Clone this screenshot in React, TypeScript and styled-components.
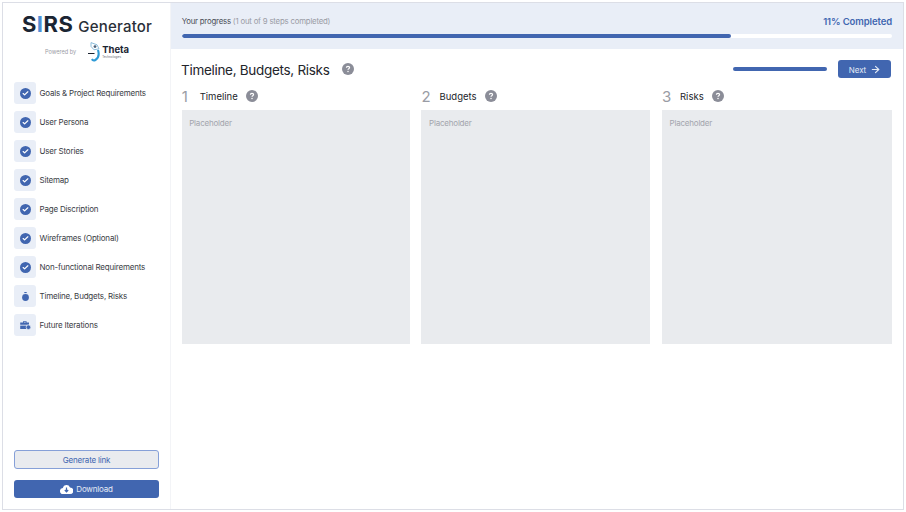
import styled, { createGlobalStyle } from "styled-components";
import { ArrowRight, Check } from "lucide-react";

const steps = [
  { label: "Goals & Project Requirements", state: "done" },
  { label: "User Persona", state: "done" },
  { label: "User Stories", state: "done" },
  { label: "Sitemap", state: "done" },
  { label: "Page Discription", state: "done" },
  { label: "Wireframes (Optional)", state: "done" },
  { label: "Non-functional Requirements", state: "done" },
  { label: "Timeline, Budgets, Risks", state: "current" },
  { label: "Future Iterations", state: "todo" },
];

const columns = ["Timeline", "Budgets", "Risks"];

function HelpIcon({ size = 12 }: { size?: number }) {
  return (
    <svg width={size} height={size} viewBox="0 0 12 12">
      <circle cx="6" cy="6" r="6" fill="#8b8d98" />
      <path
        d="M4.4 4.8c0-1 .7-1.5 1.6-1.5s1.6.5 1.6 1.3c0 1.1-1.6 1.1-1.6 2.2"
        fill="none"
        stroke="#fff"
        strokeWidth="1.2"
      />
      <circle cx="6" cy="8.6" r=".75" fill="#fff" />
    </svg>
  );
}

function StepIcon({ state }: { state: string }) {
  if (state === "done") {
    return (
      <DoneDot>
        <Check size={7} strokeWidth={4} color="#fff" />
      </DoneDot>
    );
  }
  if (state === "current") {
    return (
      <svg width="7" height="9" viewBox="0 0 7 9">
        <rect x="2.3" y="0" width="2.4" height="1.1" fill="#4166b0" />
        <circle cx="3.5" cy="5.5" r="3.4" fill="#4166b0" />
      </svg>
    );
  }
  return (
    <svg width="11" height="9" viewBox="0 0 11 9">
      <path
        d="M3 1.6V.3h3.6v1.3H9v2.2H.2V1.6zM3.9 1.1v.5h1.8v-.5z"
        fill="#4166b0"
        fillRule="evenodd"
      />
      <path d="M.2 4.6h6V8H.2z" fill="#4166b0" />
      <circle cx="8.4" cy="6.2" r="2.3" fill="#4166b0" stroke="#e9eef7" strokeWidth=".6" />
    </svg>
  );
}

function ThetaMark() {
  return (
    <svg width="13" height="20" viewBox="0 0 13 20">
      <path d="M3 .6l6 2.2 2 4-5 1-3-3.4z" fill="none" stroke="#7fb6d8" strokeWidth=".9" />
      <circle cx="7" cy="4.6" r="1.4" fill="#4a5f78" />
      <path d="M10 8c1.2 4 .8 8-2.6 10-1.4.8-2.8.4-3.6-.8" fill="none" stroke="#2f9bd6" strokeWidth="2.1" />
      <path d="M0 11.5h6.5" stroke="#1b2330" strokeWidth="1" />
    </svg>
  );
}

function CloudDownload() {
  return (
    <svg width="13" height="11" viewBox="0 0 13 11">
      <path
        d="M3.2 10A3 3 0 0 1 2.8 4 3.8 3.8 0 0 1 10 3.4 3.3 3.3 0 0 1 10 10z"
        fill="#fff"
      />
      <path d="M6.5 3.6v4M4.8 6l1.7 1.8L8.2 6" fill="none" stroke="#4166b0" strokeWidth="1.2" />
    </svg>
  );
}

export default function App() {
  return (
    <>
      <GlobalStyle />
      <Frame>
        <Sidebar>
          <Brand>
            <Wordmark>
              <Sirs>
                S<BlueI>I</BlueI>RS
              </Sirs>
              <Generator>Generator</Generator>
            </Wordmark>
            <PoweredRow>
              <PoweredBy>Powered by</PoweredBy>
              <ThetaMark />
              <ThetaText>
                <ThetaName>Theta</ThetaName>
                <ThetaSub>Technologies</ThetaSub>
              </ThetaText>
            </PoweredRow>
          </Brand>
          <StepList>
            {steps.map((s) => (
              <StepRow key={s.label}>
                <StepBox>
                  <StepIcon state={s.state} />
                </StepBox>
                <StepLabel>{s.label}</StepLabel>
              </StepRow>
            ))}
          </StepList>
          <SideActions>
            <GenerateButton>Generate link</GenerateButton>
            <DownloadButton>
              <CloudDownload />
              Download
            </DownloadButton>
          </SideActions>
        </Sidebar>
        <Main>
          <ProgressPanel>
            <ProgressText>
              <ProgressLabel>
                Your progress <ProgressNote>(1 out of 9 steps completed)</ProgressNote>
              </ProgressLabel>
              <Completed>11% Completed</Completed>
            </ProgressText>
            <Track>
              <Fill />
            </Track>
          </ProgressPanel>
          <Content>
            <TitleRow>
              <Title>Timeline, Budgets, Risks</Title>
              <HelpIcon />
              <TitleActions>
                <MiniBar />
                <NextButton>
                  <NextLabel>Next</NextLabel>
                  <ArrowRight size={11} strokeWidth={2.5} />
                </NextButton>
              </TitleActions>
            </TitleRow>
            <Columns>
              {columns.map((c, i) => (
                <Column key={c}>
                  <ColumnHead>
                    <ColumnNumber>{i + 1}</ColumnNumber>
                    <ColumnName>{c}</ColumnName>
                    <HelpIcon />
                  </ColumnHead>
                  <Placeholder>Placeholder</Placeholder>
                </Column>
              ))}
            </Columns>
          </Content>
        </Main>
      </Frame>
    </>
  );
}

const GlobalStyle = createGlobalStyle`
  html, body {
    margin: 0;
    height: 100%;
    background: #fff;
  }
  body {
    font-family: Inter, "Noto Sans", sans-serif;
    color: #23252b;
  }
  * {
    box-sizing: border-box;
  }
`;

const Frame = styled.div`
  width: 902px;
  height: 508px;
  margin: 2px 0 0 2px;
  border: 1px solid #dcdee6;
  display: flex;
  overflow: hidden;
`;

const Sidebar = styled.aside`
  width: 168px;
  flex: none;
  border-right: 1px solid #f3f4f7;
  padding: 8px 10px 11px 11px;
  display: flex;
  flex-direction: column;
`;

const Brand = styled.div`
  display: flex;
  flex-direction: column;
  align-items: center;
  height: 71px;
`;

const Wordmark = styled.div`
  display: flex;
  align-items: baseline;
  gap: 5px;
  line-height: 26px;
`;

const Sirs = styled.span`
  font-size: 22px;
  font-weight: 700;
  letter-spacing: 0.5px;
  color: #1b2533;
`;

const BlueI = styled.span`
  color: #4f8fd6;
`;

const Generator = styled.span`
  font-size: 15px;
  font-weight: 500;
  color: #2a2f38;
  letter-spacing: 0.2px;
`;

const PoweredRow = styled.div`
  display: flex;
  align-items: center;
  margin-top: 2px;
`;

const PoweredBy = styled.span`
  font-size: 5.6px;
  color: #9a9ca5;
  margin-right: 12px;
`;

const ThetaText = styled.div`
  display: flex;
  flex-direction: column;
  margin-left: 1px;
`;

const ThetaName = styled.span`
  font-size: 9.5px;
  line-height: 10px;
  font-weight: 700;
  color: #1b2533;
`;

const ThetaSub = styled.span`
  font-size: 3px;
  line-height: 4px;
  color: #666a75;
`;

const StepList = styled.ul`
  list-style: none;
  margin: 0;
  padding: 0;
  display: flex;
  flex-direction: column;
  gap: 7px;
`;

const StepRow = styled.li`
  display: flex;
  align-items: center;
  gap: 3.5px;
  height: 22px;
`;

const StepBox = styled.div`
  width: 22px;
  height: 22px;
  border-radius: 3px;
  background: #e9eef7;
  display: grid;
  place-items: center;
`;

const DoneDot = styled.div`
  width: 11px;
  height: 11px;
  border-radius: 50%;
  background: #4166b0;
  display: grid;
  place-items: center;
`;

const StepLabel = styled.span`
  font-size: 8px;
  letter-spacing: -0.2px;
  color: #3a3d45;
`;

const SideActions = styled.div`
  margin-top: auto;
  display: flex;
  flex-direction: column;
  gap: 11px;
`;

const GenerateButton = styled.button`
  width: 145px;
  height: 19px;
  padding: 0;
  border: 1px solid #86a0d8;
  border-radius: 3px;
  background: #e9ebef;
  color: #4166b0;
  font: 400 8px Inter, sans-serif;
  letter-spacing: -0.2px;
`;

const DownloadButton = styled.button`
  width: 145px;
  height: 18px;
  padding: 0;
  border: 0;
  border-radius: 3px;
  background: #4166b0;
  color: #e4eaf5;
  font: 400 8px Inter, sans-serif;
  letter-spacing: -0.2px;
  display: flex;
  align-items: center;
  justify-content: center;
  gap: 3px;
`;

const Main = styled.main`
  flex: 1;
  min-width: 0;
  display: flex;
  flex-direction: column;
`;

const ProgressPanel = styled.section`
  height: 46px;
  background: #e9eef7;
  padding: 11px 11px 0 10.7px;
`;

const ProgressText = styled.div`
  display: flex;
  justify-content: space-between;
  align-items: center;
  height: 14px;
  margin-bottom: 6px;
`;

const ProgressLabel = styled.span`
  font-size: 7.8px;
  letter-spacing: -0.2px;
  color: #4b4e57;
`;

const ProgressNote = styled.span`
  color: #9a9ca5;
`;

const Completed = styled.span`
  font-size: 9.5px;
  font-weight: 600;
  letter-spacing: -0.1px;
  color: #4166b0;
`;

const Track = styled.div`
  height: 3.5px;
  border-radius: 2px;
  background: #fff;
  overflow: hidden;
`;

const Fill = styled.div`
  width: 77.3%;
  height: 100%;
  border-radius: 2px;
  background: #4166b0;
`;

const Content = styled.div`
  flex: 1;
  padding: 11px 12px 0 10.7px;
`;

const TitleRow = styled.div`
  display: flex;
  align-items: center;
  gap: 12px;
  height: 18px;
`;

const Title = styled.h1`
  margin: 1px 0 0 -0.7px;
  font-size: 13.5px;
  line-height: 18px;
  font-weight: 400;
  letter-spacing: -0.3px;
  color: #23252b;
`;

const TitleActions = styled.div`
  margin-left: auto;
  display: flex;
  align-items: center;
  gap: 11px;
`;

const MiniBar = styled.div`
  width: 94px;
  height: 3.5px;
  border-radius: 2px;
  background: #4166b0;
`;

const NextButton = styled.button`
  width: 53px;
  height: 18px;
  padding: 0;
  border: 0;
  border-radius: 3px;
  background: #4166b0;
  color: #e4eaf5;
  font: 400 8px Inter, sans-serif;
  display: flex;
  align-items: center;
  justify-content: center;
  gap: 4px;
`;

const NextLabel = styled.span`
  margin: 1px 0 0 1px;
  letter-spacing: -0.1px;
`;

const Columns = styled.div`
  display: grid;
  grid-template-columns: 228.3fr 229fr 230fr;
  gap: 11.5px;
  margin: 11px -1px 0 0;
`;

const Column = styled.div`
  display: flex;
  flex-direction: column;
`;

const ColumnHead = styled.div`
  display: flex;
  align-items: center;
  height: 14px;
  margin-bottom: 7px;
`;

const ColumnNumber = styled.span`
  font-size: 15px;
  font-weight: 400;
  color: #9a9ca5;
  width: 18px;
`;

const ColumnName = styled.span`
  font-size: 9.5px;
  color: #23252b;
  margin-right: 8px;
`;

const Placeholder = styled.div`
  height: 234px;
  padding: 8px 7.5px;
  background: #e9ebee;
  font-size: 8px;
  letter-spacing: -0.2px;
  color: #a3a5ad;
`;
